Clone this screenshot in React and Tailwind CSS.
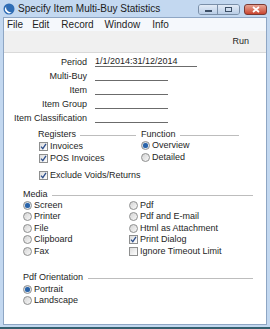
import React from "react";

const font = { fontFamily: '"Liberation Sans Narrow", "Liberation Sans", Arial, sans-serif' };

function Check({ checked }) {
  return (
    <span className="flex h-[9px] w-[9px] shrink-0 items-center justify-center border border-[#8e8f8f] bg-gradient-to-br from-[#dcdcdc] to-[#ffffff]">
      {checked && (
        <svg width="7" height="7" viewBox="0 0 7 7">
          <path d="M1 3.6 L2.8 5.6 L6 0.8" fill="none" stroke="#2d4f8c" strokeWidth="1.3" />
        </svg>
      )}
    </span>
  );
}

function Radio({ checked }) {
  return (
    <span className="flex h-[9px] w-[9px] shrink-0 items-center justify-center rounded-full border border-[#8e8f8f] bg-gradient-to-br from-[#d4d4d4] to-[#f8f8f8]">
      {checked && <span className="h-[5px] w-[5px] rounded-full bg-[#2a63a8] shadow-[0_0_1px_#6fa6e0]" />}
    </span>
  );
}

function Option({ type, checked, label, className = "h-[11.5px]" }) {
  return (
    <div className={`flex items-center gap-[2px] ${className}`}>
      {type === "radio" ? <Radio checked={checked} /> : <Check checked={checked} />}
      <span className="leading-none">{label}</span>
    </div>
  );
}

function Field({ label, value, wide }) {
  return (
    <div className="flex h-[14px] items-center">
      <span className="w-[84px] pr-[1px] text-right leading-none">{label}</span>
      <span
        className={`ml-[7px] h-[10px] border-b border-[#6b6b6b] leading-none ${wide ? "w-[102px]" : "w-[73px]"}`}
      >
        {value}
      </span>
    </div>
  );
}

function Heading({ label, lineClass, className = "" }) {
  return (
    <div className={`flex items-center ${className}`}>
      <span className="leading-none">{label}</span>
      <span className={`mt-[2px] border-t border-[#bdbdbd] ${lineClass}`} />
    </div>
  );
}

export default function App() {
  return (
    <div style={font} className="flex h-[329px] w-[270px] flex-col overflow-hidden bg-[#c3d8f0] text-[9px] text-[#1e1e1e]">
      {/* Title bar */}
      <div className="flex h-[17px] items-center pl-[3px] pr-[3px]">
        <svg width="12" height="12" viewBox="0 0 12 12">
          <circle cx="6" cy="6" r="5.5" fill="#2f6db5" />
          <path d="M3.2 3.5 A3.8 3.8 0 0 0 8.8 9 A4.6 4.6 0 0 1 3.2 3.5 Z" fill="#ffffff" />
        </svg>
        <span className="ml-[3px] text-[10px] leading-none text-[#1b1b1b]">Specify Item Multi-Buy Statistics</span>
        <div className="ml-auto flex items-start gap-[4px] self-start pt-[4px]">
          <div className="flex h-[11px] overflow-hidden rounded-[3px] border border-[#7a8fa8]">
            <div className="flex w-[19px] items-center justify-center border-r border-[#7a8fa8] bg-gradient-to-b from-[#e3ecf7] to-[#b9cde6]">
              <span className="mt-[3px] h-[2px] w-[7px] bg-[#3c4f66]" />
            </div>
            <div className="flex w-[21px] items-center justify-center bg-gradient-to-b from-[#e3ecf7] to-[#b9cde6]">
              <span className="h-[5px] w-[7px] border border-[#3c4f66]" />
            </div>
          </div>
          <div className="flex h-[11px] w-[23px] items-center justify-center rounded-[3px] border border-[#7a3a33] bg-gradient-to-b from-[#e6a393] to-[#c8432f]">
            <svg width="8" height="7" viewBox="0 0 8 7">
              <path d="M1 1 L7 6 M7 1 L1 6" stroke="#ffffff" strokeWidth="1.7" />
            </svg>
          </div>
        </div>
      </div>

      {/* Inner frame */}
      <div className="mx-[3px] mb-[2px] flex flex-1 flex-col border border-[#8ea6c4] bg-white">
        {/* Menu bar */}
        <div className="flex h-[13px] items-center gap-[9px] bg-[#f5f8fc] pl-[3px] text-[10px] leading-none">
          <span>File</span>
          <span>Edit</span>
          <span className="ml-[3px]">Record</span>
          <span className="ml-[2px]">Window</span>
          <span className="ml-[3px]">Info</span>
        </div>
        {/* Toolbar */}
        <div className="flex h-[22px] items-center justify-end border-b border-[#d9d9d9] bg-[#f0f0f0] pr-[17px]">
          <span className="leading-none">Run</span>
        </div>

        {/* Form */}
        <div className="flex flex-col pt-[2px]">
          <Field label="Period" value="1/1/2014:31/12/2014" wide />
          <Field label="Multi-Buy" />
          <Field label="Item" />
          <Field label="Item Group" />
          <Field label="Item Classification" />

          <div className="mt-[3px] flex pl-[34px]">
            <div className="flex w-[103px] flex-col">
              <Heading label="Registers" lineClass="ml-[4px] w-[56px]" className="h-[12px]" />
              <div className="pl-[1px]">
                <Option type="check" checked label="Invoices" className="h-[12px]" />
                <Option type="check" checked label="POS Invoices" className="h-[12px]" />
                <Option type="check" checked label="Exclude Voids/Returns" className="mt-[5px] h-[12px]" />
              </div>
            </div>
            <div className="flex flex-col">
              <Heading label="Function" lineClass="ml-[4px] w-[59px]" className="h-[12px]" />
              <Option type="radio" checked label="Overview" className="h-[11.5px]" />
              <Option type="radio" label="Detailed" className="h-[11.5px]" />
            </div>
          </div>

          <div className="mt-[8px] flex flex-col pl-[19px] pr-[13px]">
            <Heading label="Media" lineClass="ml-[4px] flex-1" className="h-[10.5px]" />
            <div className="flex">
              <div className="flex w-[106px] flex-col">
                <Option type="radio" checked label="Screen" />
                <Option type="radio" label="Printer" />
                <Option type="radio" label="File" />
                <Option type="radio" label="Clipboard" />
                <Option type="radio" label="Fax" />
              </div>
              <div className="flex flex-col">
                <Option type="radio" label="Pdf" />
                <Option type="radio" label="Pdf and E-mail" />
                <Option type="radio" label="Html as Attachment" />
                <Option type="check" checked label="Print Dialog" />
                <Option type="check" label="Ignore Timeout Limit" />
              </div>
            </div>

            <Heading label="Pdf Orientation" lineClass="ml-[5px] flex-1" className="mt-[15px] h-[11.5px]" />
            <Option type="radio" checked label="Portrait" />
            <Option type="radio" label="Landscape" />
          </div>
        </div>
      </div>
      <div className="h-[2px] bg-[#35606f]" />
    </div>
  );
}
